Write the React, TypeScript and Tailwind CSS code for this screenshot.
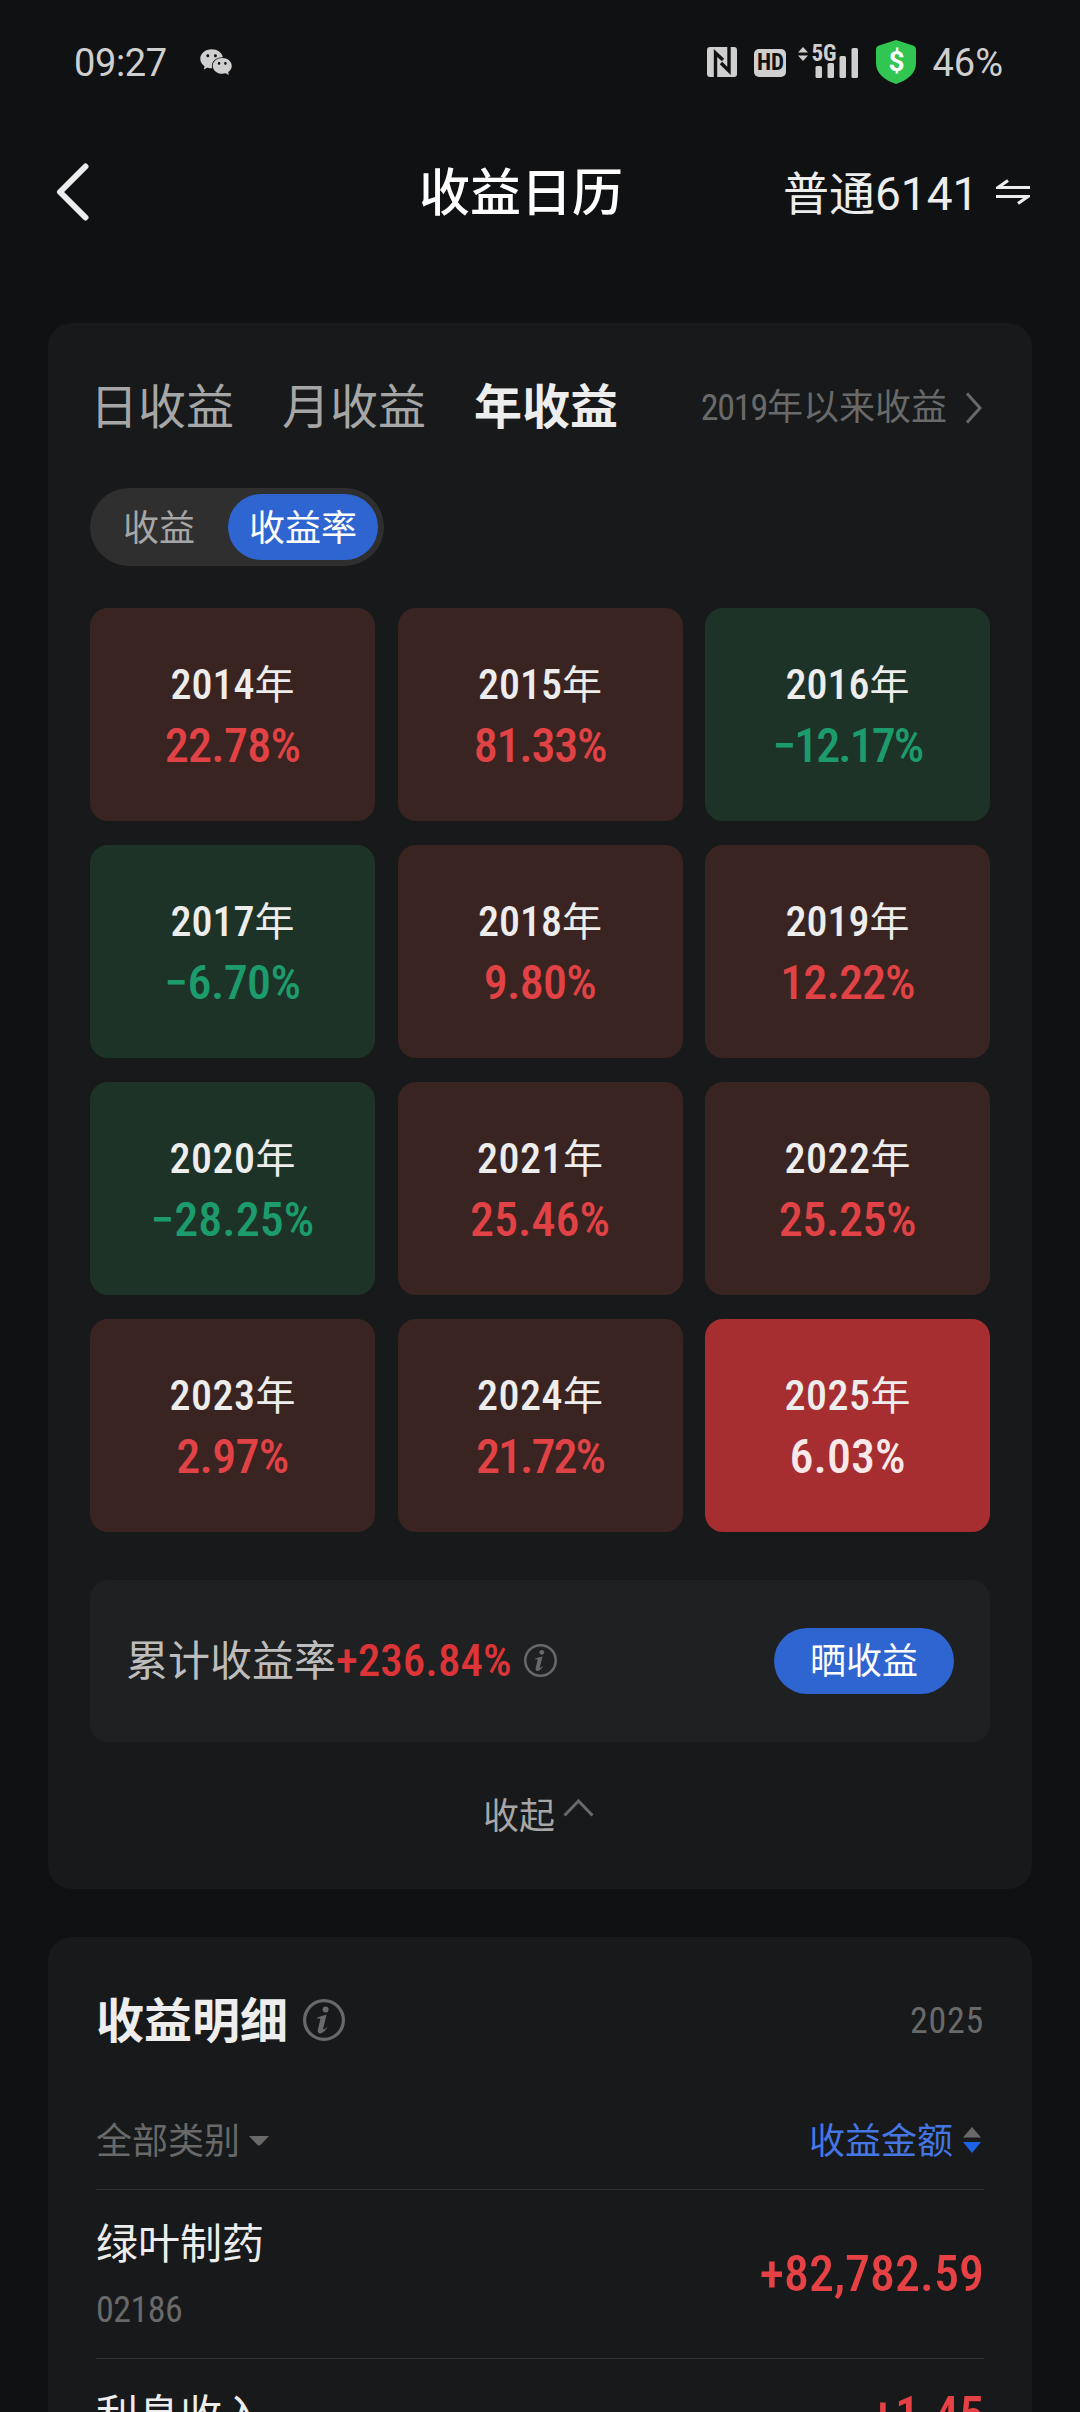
import React from "react";
import { AiFillWechat } from "react-icons/ai";

const years = [
    { year: 2014, rate: "22.78%", spacing: "tracking-[-0.7px]" },
    { year: 2015, rate: "81.33%", spacing: "tracking-[-1.2px]" },
    { year: 2016, rate: "−12.17%", spacing: "tracking-[-2px]" },
    { year: 2017, rate: "−6.70%", spacing: "tracking-[-0.6px]" },
    { year: 2018, rate: "9.80%", spacing: "tracking-[-0.7px]" },
    { year: 2019, rate: "12.22%", spacing: "tracking-[-0.9px]" },
    { year: 2020, rate: "−28.25%" },
    { year: 2021, rate: "25.46%" },
    { year: 2022, rate: "25.25%", spacing: "tracking-[-0.4px]" },
    { year: 2023, rate: "2.97%", spacing: "tracking-[-0.7px]" },
    { year: 2024, rate: "21.72%", spacing: "tracking-[-2px]" },
    { year: 2025, rate: "6.03%", active: true },
];

const details = [
    { name: "绿叶制药", code: "02186", amount: "+82,782.59" },
    { name: "利息收入", amount: "+1.45" },
];

function tileColor({ rate, active }: any) {
    if (active) return "bg-[#a62d30] text-[#f9e8e9]";
    if (rate.startsWith("−")) return "bg-[#1e3328] text-[#1c9c6c]";
    return "bg-[#3a2421] text-[#e14245]";
}

function InfoIcon({ className }: any) {
    return (
        <svg viewBox="0 0 42 42" fill="none" className={className}>
            <circle cx="21" cy="21" r="19.4" stroke="currentColor" strokeWidth="3.2" />
            <circle cx="22.6" cy="10.6" r="3" fill="currentColor" />
            <path
                d="M14.2 18.4C17.6 17.6 20 16.4 23.6 15.8L20.2 29.6C19.9 31 20.8 30.8 24.8 27.8C22.6 31.6 19.4 34.6 16.9 34.4C14.8 34.2 14.4 32.4 14.9 30.4L17.3 20.6C17.5 19.4 16.200 19.4 14.2 19.8Z"
                fill="currentColor"
            />
        </svg>
    );
}

function StatusBar() {
    return (
        <div className="flex h-[124px] items-center justify-between pl-[74px] pr-[77px] text-[#cfcfcf]">
            <div className="flex items-center">
                <span className="pt-0.5 text-[38px] tracking-[-0.4px]">09:27</span>
                <AiFillWechat className="ml-[31px] size-9" />
            </div>
            <div className="flex items-center">
                <svg width="30" height="30" viewBox="0 0 30 30">
                    <rect width="30" height="30" rx="3" fill="currentColor" />
                    <path
                        d="M8.500 30V6L16 13M22 0V24L14 16"
                        fill="none"
                        stroke="#101113"
                        strokeWidth="3.4"
                    />
                </svg>
                <div className="ml-[17px] mt-0.5 flex h-7 w-8 items-center justify-center rounded-[5px] bg-[#cfcfcf] text-[23px] font-bold text-[#101113] [font-stretch:75%]">
                    HD
                </div>
                <div className="relative ml-3 h-8 w-[60px]">
                    <svg width="60" height="32" viewBox="0 0 60 32" fill="currentColor">
                        <path d="M0 6.5L5 1L10 6.5ZM0 9.5H10L5 15Z" />
                        <rect x="17.5" y="20" width="6.5" height="12" rx="1.5" />
                        <rect x="29.5" y="17" width="6.5" height="15" rx="1.5" />
                        <rect x="41.5" y="10" width="6.5" height="22" rx="1.5" />
                        <rect x="53.5" y="2" width="6.5" height="30" rx="1.5" />
                    </svg>
                    <span className="absolute left-[13px] top-[-3px] text-[23px] font-bold leading-[22px] [font-stretch:75%]">
                        5G
                    </span>
                </div>
                <div className="relative ml-[18px] flex h-11 w-10 items-center justify-center">
                    <svg
                        width="40"
                        height="44"
                        viewBox="0 0 40 44"
                        fill="#31c651"
                        className="absolute inset-0"
                    >
                        <path d="M20 0L37 5.5Q40 6.5 40 9.5V23C40 33 32 40 20 44C8 40 0 33 0 23V9.5Q0 6.5 3 5.5Z" />
                    </svg>
                    <span className="relative text-[28px] font-bold text-white">$</span>
                </div>
                <span className="ml-4 pt-0.5 text-[38px]">46%</span>
            </div>
        </div>
    );
}

function NavBar() {
    return (
        <div className="grid h-[138px] grid-cols-[420px_1fr_247px] items-center pr-[50px]">
            <svg
                width="34"
                height="58"
                viewBox="0 0 34 58"
                fill="none"
                className="mb-0.5 ml-[56px]"
            >
                <path
                    d="M29.5 3.5L4 29L29.5 54.500"
                    stroke="#ededed"
                    strokeWidth="6"
                    strokeLinecap="round"
                    strokeLinejoin="round"
                />
            </svg>
            <h1 className="ml-[-1px] pt-0.5 text-[51px] font-medium text-white">收益日历</h1>
            <div className="flex items-center justify-between whitespace-nowrap text-[#ededed]">
                <span className="pt-0.5 text-[46px]">普通6141</span>
                <svg
                    width="34"
                    height="26"
                    viewBox="0 0 34 26"
                    fill="none"
                    stroke="currentColor"
                    strokeWidth="3.2"
                    className="mb-0.5"
                >
                    <path d="M34 8.5H2L12 1.5M0 17.5H32L22 24.5" />
                </svg>
            </div>
        </div>
    );
}

function CalendarCard() {
    return (
        <div className="mx-12 mt-[61px] h-[1566px] rounded-3xl bg-[#17191a] px-[42px] pt-[47px]">
            <div className="flex h-[72px] items-center pt-1 text-5xl text-[#a6a6a6]">
                <span>日收益</span>
                <span className="ml-12">月收益</span>
                <span className="ml-12 font-bold text-[#ededed]">年收益</span>
                <div className="ml-auto mr-2 flex items-center text-4xl text-[#696969]">
                    <span className="[font-stretch:75%]">
                        <span className="tracking-[-1.2px]">2019</span>年以来收益
                    </span>
                    <svg width="17" height="32" viewBox="0 0 17 32" fill="none" className="ml-[18px]">
                        <path d="M2 1.5L15 16L2 30.5" stroke="currentColor" strokeWidth="3" />
                    </svg>
                </div>
            </div>

            <div className="mt-[46px] flex h-[78px] w-[294px] items-center justify-between rounded-full bg-[#2f2f2f] pl-[33px] pr-1.5 text-4xl">
                <span className="pt-1 text-[#a6a6a6]">收益</span>
                <span className="flex h-[66px] w-[150px] items-center justify-center rounded-full bg-[#2f65d0] pt-1 text-white">
                    收益率
                </span>
            </div>

            <div className="mt-[42px] grid grid-cols-3 gap-x-[22.5px] gap-y-6">
                {years.map((item) => (
                    <div
                        key={item.year}
                        className={`flex h-[213px] flex-col items-center rounded-[18px] pt-[46px] font-medium ${tileColor(item)}`}
                    >
                        <div className="flex h-[60px] items-center text-[#ededed]">
                            <span
                                className={`text-[42px] [font-stretch:85%] ${item.year < 2020 ? "" : "tracking-[0.5px]"}`}
                            >
                                {item.year}
                            </span>
                            <span className="pt-[3px] text-[40px] font-normal">年</span>
                        </div>
                        <div
                            className={`flex h-[63px] items-center pt-px text-[48px] [font-stretch:85%] ${item.spacing ?? ""}`}
                        >
                            {item.rate}
                        </div>
                    </div>
                ))}
            </div>

            <div className="mt-12 flex h-[162px] items-center rounded-[18px] bg-[#1e2021] px-9">
                <span className="text-[42px] text-[#bdbdbd]">累计收益率</span>
                <span className="text-[45px] font-medium text-[#dd3438] [font-stretch:85%]">
                    +236.84%
                </span>
                <InfoIcon className="mb-0.5 ml-3 size-[33px] text-[#696969]" />
                <button className="ml-auto h-[66px] w-[180px] rounded-full bg-[#2f65d0] pt-0.5 text-4xl text-white">
                    晒收益
                </button>
            </div>

            <div className="mt-[42px] flex h-[63px] items-center justify-center pr-[3px] pt-[3px] text-4xl text-[#a6a6a6]">
                收起
                <svg width="31" height="18" viewBox="0 0 31 18" fill="none" className="mb-[18px] ml-2">
                    <path d="M1.5 16.5L15.5 2L29.5 16.5" stroke="#696969" strokeWidth="3" />
                </svg>
            </div>
        </div>
    );
}

function DetailCard() {
    return (
        <div className="mx-12 mt-12 h-[520px] rounded-t-3xl bg-[#17191a] px-12 pt-[47px]">
            <div className="flex h-[72px] items-center">
                <h2 className="pt-1 text-5xl font-bold text-[#ededed]">收益明细</h2>
                <InfoIcon className="ml-[15px] size-[42px] text-[#696969]" />
                <span className="ml-auto pt-0.5 text-4xl tracking-[0.7px] text-[#696969] [font-stretch:85%]">
                    2025
                </span>
            </div>
            <div className="mt-[34px] flex h-[100px] items-center justify-between border-b border-[#313333] pt-1 text-4xl">
                <div className="flex items-center text-[#696969]">
                    全部类别
                    <svg width="22" height="11" viewBox="0 0 22 11" fill="currentColor" className="ml-2">
                        <path d="M1 0H21L13 8.500Q11 10.500 9 8.500Z" />
                    </svg>
                </div>
                <div className="flex items-center text-[#4476e4]">
                    收益金额
                    <svg width="18" height="26" viewBox="0 0 18 26" className="mb-1 ml-2.5 mr-[3px]">
                        <path d="M9 0L18 10.500H0Z" fill="#696969" />
                        <path d="M9 26L0 15H18Z" fill="#1c62e6" />
                    </svg>
                </div>
            </div>
            {details.map((item) => (
                <div
                    key={item.name}
                    className={`flex items-center justify-between border-b border-[#313333] ${item.code ? "h-[169px]" : "h-[114px]"}`}
                >
                    <div>
                        <div className="text-[42px] leading-[60px] text-[#ededed]">
                            {item.name}
                        </div>
                        {item.code && (
                            <div className="mt-2 h-[50px] text-4xl leading-[54px] tracking-[-0.5px] text-[#696969] [font-stretch:85%]">
                                {item.code}
                            </div>
                        )}
                    </div>
                    <span className="text-[50px] font-medium text-[#e64245] [font-stretch:85%]">
                        {item.amount}
                    </span>
                </div>
            ))}
        </div>
    );
}

export default function App() {
    return (
        <div className="h-[2412px] w-[1080px] overflow-hidden bg-[#101113] font-[Roboto,'Noto_Sans_CJK_SC',sans-serif]">
            <StatusBar />
            <NavBar />
            <CalendarCard />
            <DetailCard />
        </div>
    );
}
